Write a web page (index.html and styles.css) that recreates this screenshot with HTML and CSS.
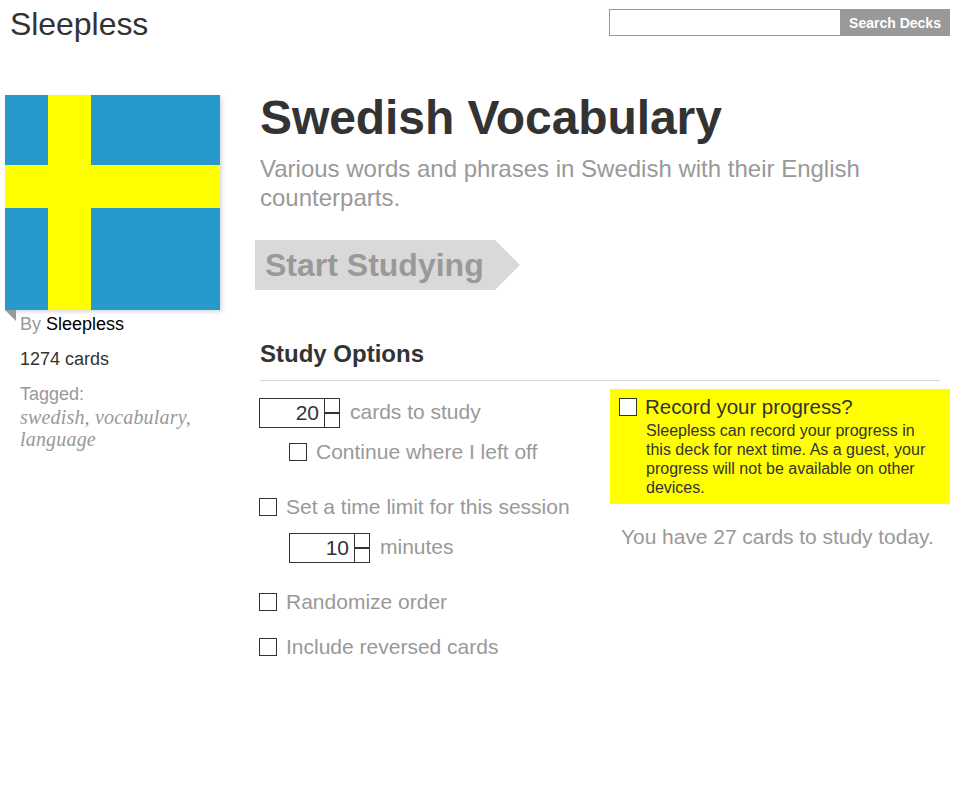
FILE: index.html
```html
<!DOCTYPE html>
<html lang="en">
<head>
<meta charset="utf-8">
<title>Swedish Vocabulary - Sleepless</title>
<link rel="stylesheet" href="styles.css">
</head>
<body>
<header class="header">
  <div class="logo">Sleepless</div>
  <form class="search">
    <input class="search-input" type="text" aria-label="Search">
    <button class="search-button" type="button">Search Decks</button>
  </form>
</header>
<div class="page">
  <aside class="sidebar">
    <svg class="flag" viewBox="0 0 215 215" width="215" height="215" shape-rendering="crispEdges">
      <rect width="215" height="215" fill="#2899cd"/>
      <path d="M43 0h43v70h129v43H86v102H43V113H0V70h43z" fill="#ff0"/>
    </svg>
    <div class="fold"></div>
    <div class="meta">
      <p class="author">By <a>Sleepless</a></p>
      <p class="count">1274 cards</p>
      <p class="tag-label">Tagged:</p>
      <p class="tags">swedish, vocabulary,<br>language</p>
    </div>
  </aside>
  <main class="main">
    <h1>Swedish Vocabulary</h1>
    <p class="description">Various words and phrases in Swedish with their English<br>counterparts.</p>
    <a class="start">Start Studying</a>
    <h2>Study Options</h2>
    <div class="columns">
      <div class="options">
        <div class="row"><div class="number"><b>20</b><i></i></div><span>cards to study</span></div>
        <label class="row sub"><i class="box"></i><span>Continue where I left off</span></label>
        <label class="row group"><i class="box"></i><span>Set a time limit for this session</span></label>
        <div class="row sub"><div class="number"><b>10</b><i></i></div><span>minutes</span></div>
        <label class="row group"><i class="box"></i><span>Randomize order</span></label>
        <label class="row last"><i class="box"></i><span>Include reversed cards</span></label>
      </div>
      <div class="side">
        <div class="record">
          <i class="box"></i>
          <div>
            <div class="record-title">Record your progress?</div>
            <p class="record-text">Sleepless can record your progress in<br>this deck for next time. As a guest, your<br>progress will not be available on other<br>devices.</p>
          </div>
        </div>
        <p class="due">You have 27 cards to study today.</p>
      </div>
    </div>
  </main>
</div>
</body>
</html>
```
FILE: styles.css
```css
* { box-sizing: border-box; }
body { margin: 0; background: #fff; color: #333; font-family: "Liberation Sans", Helvetica, Arial, sans-serif; white-space: nowrap; }
h1, h2, p { margin: 0; }
.header { display: flex; justify-content: space-between; height: 95px; padding: 5px 10px 0; }
.logo { font-size: 32px; line-height: 38px; letter-spacing: -.05px; }
.search { display: flex; width: 341px; height: 27px; margin-top: 4px; }
.search-input { flex: 1; min-width: 0; border: 1px solid #999; border-right: 0; background: #fff; padding: 0 6px; outline: 0; border-radius: 0; }
.search-button { width: 110px; padding: 1px 0 0; border: 0; background: #999; color: #fff; font: bold 14px/26px "Liberation Sans", sans-serif; }
.page { display: grid; grid-template-columns: 215px 695px; column-gap: 35px; padding-left: 5px; }
.flag { display: block; box-shadow: 2px 2px 4px rgba(0, 0, 0, .15); }
.fold { width: 11px; height: 11px; background: #999; clip-path: polygon(0 0, 100% 0, 100% 100%); }
.meta { margin: -8px 0 0 15px; font-size: 18px; line-height: 22px; }
.author, .tag-label, .tags { color: #999; }
.author a { color: #000; }
.count, .tag-label { margin-top: 13px; }
.tags { margin-top: 1px; font: italic 20px/22px "Liberation Serif", Georgia, serif; letter-spacing: .18px; }
.main { margin-top: -6px; }
h1 { padding-left: 5px; font-size: 48px; line-height: 58px; letter-spacing: -.08px; }
.description { margin-top: 7px; padding-left: 5px; color: #999; font-size: 24px; line-height: 29px; }
.start { display: block; width: 265px; height: 50px; margin-top: 28px; padding-left: 10px; background: #d9d9d9; color: #999; font-size: 32px; font-weight: bold; line-height: 50px; clip-path: polygon(0 0, 240px 0, 100% 50%, 240px 100%, 0 100%); }
h2 { width: 680px; height: 42px; margin: 49px 0 0 5px; border-bottom: 1px solid #d9d9d9; font-size: 24px; line-height: 30px; }
.columns { display: grid; grid-template-columns: 350px 340px; margin-left: 5px; }
.options { padding-top: 16px; margin-left: -1px; }
.row { display: flex; align-items: center; height: 30px; margin-bottom: 10px; color: #999; font-size: 21px; }
.row span { padding-left: 1px; }
.sub { margin-left: 30px; }
.group { margin-top: 25px; }
.last { margin-top: 15px; }
.box { flex: none; width: 18px; height: 18px; margin-right: 8px; border: 1px solid #333; background: #fff; }
.number { display: flex; width: 81px; height: 30px; margin: 2px 9px 0 0; border: 1px solid #333; color: #333; }
.number b { width: 65px; padding-right: 5px; border-right: 1px solid #333; font-weight: normal; line-height: 28px; text-align: right; }
.number i { flex: 1; height: 15px; border-bottom: 2px solid #333; }
.side { padding-top: 8px; }
.record { display: flex; height: 115px; padding: 9px 0 0 9px; background: #ff0; }
.record-title { margin-top: -1px; font-size: 20.5px; line-height: 20px; letter-spacing: -.04px; }
.record-text { margin-top: 4px; padding-left: 1px; font-size: 16px; line-height: 19px; }
.due { margin: 21px 0 0 11px; color: #999; font-size: 21px; line-height: 24px; letter-spacing: -.04px; }
```
